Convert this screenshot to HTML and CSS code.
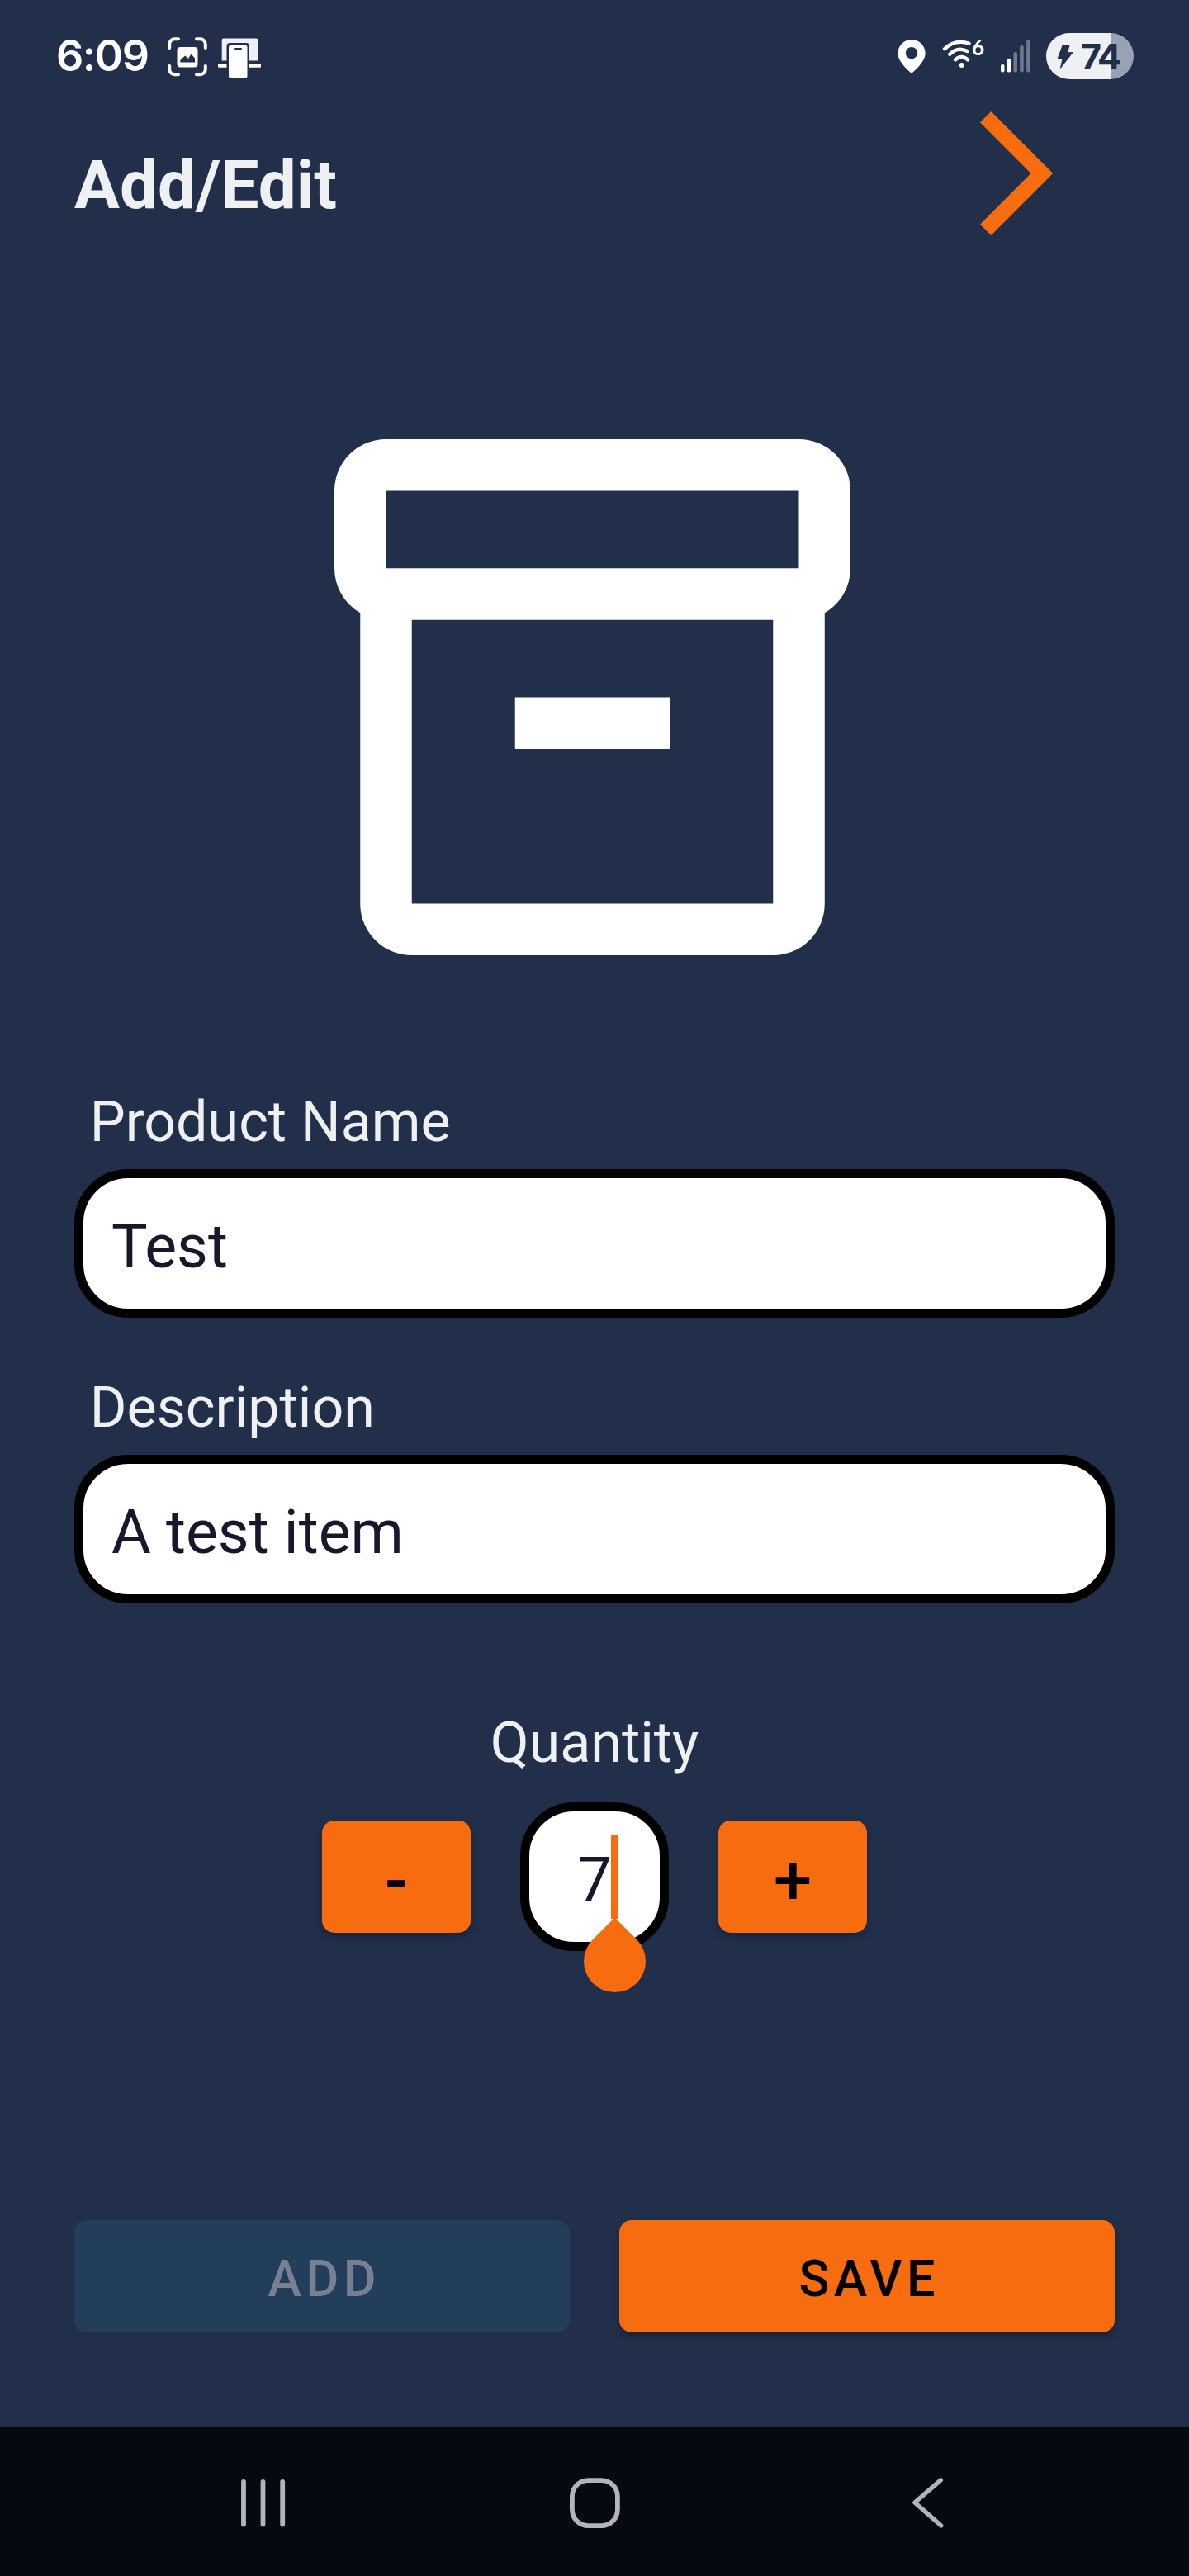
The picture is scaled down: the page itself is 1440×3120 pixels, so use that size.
FILE: index.html
```html
<!DOCTYPE html>
<html lang="en">
<head>
<meta charset="utf-8">
<title>Add/Edit</title>
<link rel="stylesheet" href="styles.css">
</head>
<body>
<div class="screen">
  <header class="status">
    <div class="status-left">
      <span class="clock">6:09</span>
      <svg class="icon-capture" width="48" height="48" viewBox="0 0 48 48" fill="none">
        <path d="M2.2 13V8.5A6.3 6.3 0 0 1 8.500 2.200H13M35 2.200H39.500A6.300 6.300 0 0 1 45.800 8.500V13M45.800 35V39A6.300 6.300 0 0 1 39.500 45.300H35M13 45.300H8.500A6.300 6.300 0 0 1 2.200 39V35" stroke="#fff" stroke-width="4" stroke-linecap="round"/>
        <rect x="11.500" y="12" width="25" height="24.500" rx="4" fill="#fff"/>
        <path d="M15.300 30.500V28L21 22.500L25 26L28.500 20.500L33 25.500V30.500Z" fill="#222f4b"/>
      </svg>
      <svg class="icon-cast" width="52" height="50" viewBox="0 0 52 50">
        <path d="M6.700 1.500H46.300Q48.300 1.500 48.300 3.500V28.500H4.700V3.500Q4.700 1.500 6.700 1.500Z" fill="#eef0f4"/>
        <rect y="32.200" width="52" height="4.600" rx="1" fill="#fff"/>
        <path d="M14.500 7H34Q38 7 38 11V50H10.500V11Q10.500 7 14.500 7Z" fill="#222f4b"/>
        <rect x="13" y="10" width="22.500" height="39.200" rx="2" fill="#fff"/>
        <rect x="20" y="13" width="9" height="2" rx="1" fill="#222f4b"/>
      </svg>
    </div>
    <div class="status-right">
      <svg class="icon-pin" width="34" height="41" viewBox="0 0 34 41">
        <path fill-rule="evenodd" d="M17 0A16.600 16.600 0 0 0 .4 16.600C.4 25 8 33 17 41C26 33 33.600 25 33.600 16.600A16.600 16.600 0 0 0 17 0ZM17 9A7.200 7.200 0 1 1 17 23.400A7.200 7.200 0 1 1 17 9Z" fill="#fff"/>
      </svg>
      <div class="wifi">
        <svg width="36" height="36" viewBox="0 0 36 36" fill="none" stroke="#fff" stroke-width="4.400" stroke-linecap="round">
          <path d="M3 12.300Q15 .2 32.500 5.500M9.300 18.800Q18.500 9 30.500 15M16 25.300Q23.500 18.800 31 25.300"/>
          <circle cx="23.700" cy="32" r="2.900" fill="#fff" stroke="none"/>
        </svg>
        <span class="wifi-gen">6</span>
      </div>
      <svg class="icon-signal" width="36" height="40" viewBox="0 0 36 40" fill="#fff">
        <rect x="0" y="30" width="4.500" height="9.500" rx="2"/>
        <rect x="7.700" y="22.800" width="4.500" height="16.700" rx="2"/>
        <g fill="#6f7990"><rect x="15.500" y="15" width="4.500" height="24.500" rx="2"/><rect x="23.200" y="7" width="4.500" height="32.500" rx="2"/><rect x="31.200" y="0" width="4.500" height="39.500" rx="2"/></g>
      </svg>
      <div class="battery">
        <svg width="20" height="29" viewBox="0 0 20 29"><path d="M7 1H15L12.500 9.700H19L4.500 28.300L7 17.300H1Z" fill="#222f4b" stroke="#222f4b" stroke-linejoin="round"/></svg>
        <span class="battery-level">74</span>
      </div>
    </div>
  </header>

  <div class="toolbar">
    <h1 class="title">Add/Edit</h1>
    <svg class="forward" width="90" height="152" viewBox="0 0 90 152"><path d="M14.300 1L89.200 76L14.300 151L1 137.700L62.500 76L1 14.300Z" fill="#f86c10"/></svg>
  </div>

  <svg class="box" width="625" height="625" viewBox="0 0 20 20" fill="#fff">
    <path fill-rule="evenodd" d="M2 0H18A2 2 0 0 1 20 2V5A2 2 0 0 1 19 6.730V18A2 2 0 0 1 17 20H3A2 2 0 0 1 1 18V6.730A2 2 0 0 1 0 5V2A2 2 0 0 1 2 0ZM2 2V5H18V2ZM3 7V18H17V7Z"/>
    <path d="M7 10H13V12H7Z"/>
  </svg>

  <main class="form">
    <div class="field">
      <div class="label">Product Name</div>
      <div class="input">Test</div>
    </div>
    <div class="field">
      <div class="label">Description</div>
      <div class="input">A test item</div>
    </div>
    <div class="quantity">
      <div class="quantity-label">Quantity</div>
      <div class="stepper">
        <div class="button step">-</div>
        <div class="input amount">7<span class="caret"></span><span class="handle"></span></div>
        <div class="button step">+</div>
      </div>
    </div>
    <div class="actions">
      <div class="button disabled">ADD</div>
      <div class="button">SAVE</div>
    </div>
  </main>

  <nav class="nav">
    <svg width="62" height="62" viewBox="0 0 62 62" fill="none" stroke="#b1b4b9" stroke-width="5.800" stroke-linecap="round"><path d="M7 5V56.500M30.500 5V56.500M54.200 5V56.500"/></svg>
    <svg width="62" height="62" viewBox="0 0 62 62" fill="none" stroke="#b1b4b9" stroke-width="5.800"><rect x="3.900" y="3.100" width="55" height="55" rx="19.500"/></svg>
    <svg width="62" height="62" viewBox="0 0 62 62" fill="none" stroke="#b1b4b9" stroke-width="5.400" stroke-linecap="round" stroke-linejoin="round"><path d="M49.300 2.900L17.900 30L49.800 58"/></svg>
  </nav>
</div>
</body>
</html>
```
FILE: styles.css
```css
* { box-sizing: border-box; }
body { margin: 0; font-family: Roboto, sans-serif; }
svg { display: block; flex: none; }

.screen {
  display: flex;
  flex-direction: column;
  width: 1440px;
  height: 3120px;
  background: #222f4b;
  color: #eef0f2;
  overflow: hidden;
}

.status {
  display: flex;
  justify-content: space-between;
  height: 134px;
  padding: 40px 67px 0 68px;
  color: #fff;
  font-family: Inter, sans-serif;
}
.status-left, .status-right { display: flex; align-items: flex-start; }
.clock {
  width: 135px;
  font-size: 52px;
  font-weight: 600;
  line-height: 56px;
  letter-spacing: -1.5px;
}
.icon-capture { margin-top: 5px; }
.icon-cast { margin: 5px 0 0 13px; }
.icon-pin { margin-top: 7.500px; }
.wifi { display: flex; width: 70px; margin: 7px 0 0 20px; }
.wifi-gen { font-family: Lato, sans-serif; font-size: 26px; font-weight: 700; line-height: 20px; }
.icon-signal { margin: 8px 19px 0 1px; }
.battery {
  display: flex;
  align-items: center;
  width: 106px;
  height: 56px;
  padding-left: 13px;
  gap: 9px;
  border-radius: 28px;
  background: linear-gradient(90deg, #eef0f4 78px, #9aa1b3 78px);
  color: #222f4b;
}
.battery-level { font-size: 43px; font-weight: 700; letter-spacing: -2.500px; }

.toolbar {
  display: flex;
  justify-content: space-between;
  height: 398px;
  padding: 0 164px 0 90px;
}
.title {
  margin: 42px 0 0;
  font-size: 81.800px;
  font-weight: 700;
  line-height: 97px;
}

.box { margin-left: 404.700px; }

.form { flex: 1; padding: 162px 90px 0; }
.field { margin-bottom: 69px; }
.label, .quantity-label { font-size: 68.200px; line-height: 80px; }
.label { padding-left: 18.750px; }
.input {
  height: 180px;
  margin-top: 17px;
  padding: 4px 34px 0;
  border: 11px solid #000;
  border-radius: 65px;
  background: #fff;
  color: #19172b;
  font-size: 73.300px;
  line-height: 158px;
}
.quantity { display: flex; flex-direction: column; align-items: center; margin-top: 129px; }
.quantity .stepper { display: flex; align-items: center; gap: 60px; margin-top: 32px; }
.amount {
  position: relative;
  width: 180px;
  margin: 0;
  padding: 4px 0 0;
  text-align: center;
}
.caret {
  position: absolute;
  left: 99px;
  top: 29px;
  width: 8px;
  height: 101px;
  background: #f86c10;
}
.handle {
  position: absolute;
  left: 65.500px;
  top: 144px;
  width: 75px;
  height: 75px;
  border-radius: 0 50% 50% 50%;
  background: #f86c10;
  transform: rotate(45deg);
}

.button {
  flex: 1;
  height: 136px;
  padding-top: 6px;
  border-radius: 15px;
  background: #f86c10;
  box-shadow: 0 5px 8px rgba(10, 15, 30, .35);
  color: #000;
  font-size: 61px;
  font-weight: 500;
  line-height: 130px;
  letter-spacing: 5.450px;
  text-indent: 5.450px;
  text-align: center;
}
.step { flex: none; width: 180px; padding-top: 8px; font-size: 83px; }
.disabled { background: #223e5b; color: #777f93; box-shadow: none; }
.actions { display: flex; gap: 60px; margin-top: 326px; }

.nav {
  display: flex;
  justify-content: space-between;
  height: 180px;
  padding: 61px 288px 0;
  background: #050910;
}
```
